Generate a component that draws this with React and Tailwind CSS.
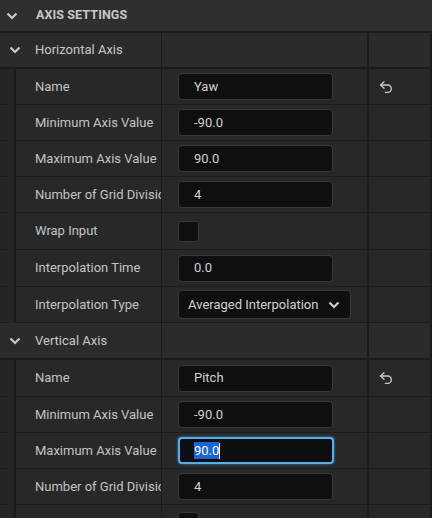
import React from 'react';
import { Undo2 } from 'lucide-react';

const font = { fontFamily: 'Roboto, "Noto Sans", sans-serif' };

const Chevron = ({ className = '' }) => (
    <svg width="12" height="8" viewBox="0 0 12 8" className={className}>
        <path d="M1.5 1.5 6 6l4.5-4.5" stroke="currentColor" strokeWidth="2.2" fill="none" />
    </svg>
);

const TextBox = ({ value }) => (
    <div className="w-[155px] h-[27px] rounded-[4px] bg-[#0f0f0f] border border-[#383838] pl-[15px] flex items-center text-[13px] text-[#d2d2d2]">
        {value}
    </div>
);

const FocusedBox = ({ value }) => (
    <div className="w-[156px] h-[27px] rounded-[4px] bg-[#0c0e12] border-2 border-[#5aaee6] shadow-[0_0_3px_#2b84c8] pl-[14px] flex items-center text-[13px] text-white">
        <span className="bg-[#1765d6] leading-[17px]">{value}</span>
        <span className="w-px h-[16px] bg-white" />
    </div>
);

const CheckBox = () => (
    <div className="w-[21px] h-[21px] rounded-[3px] bg-[#0f0f0f] border border-[#383838]" />
);

const Dropdown = ({ value }) => (
    <div className="w-[173px] h-[29px] rounded-[4px] bg-[#0f0f0f] border border-[#383838] pl-[9px] pr-[10px] flex items-center justify-between text-[13px] text-[#d2d2d2]">
        <span>{value}</span>
        <Chevron className="text-[#d0d0d0]" />
    </div>
);

// tall rows are 37px, the rest 36px (the panel is laid out at ~36.3px per row)
const Row = ({ label, children, reset, tall }) => (
    <div className={`flex ${tall ? 'h-[37px]' : 'h-[36px]'} bg-[#282828]`}>
        <div className="w-[16px] shrink-0 flex flex-col justify-end bg-[#252525] border-r-2 border-[#1b1b1b]">
            <div className="h-px w-[8px] bg-[#1b1b1b]" />
        </div>
        <div className="flex flex-1 border-b border-[#1b1b1b]">
            <div className="w-[146px] shrink-0 border-r border-[#1b1b1b] pl-[19px] flex items-center overflow-hidden whitespace-nowrap text-[13px] text-[#c4c4c4]">
                {label}
            </div>
            <div className="w-[207px] shrink-0 border-r-2 border-[#1b1b1b] pl-[16px] flex items-center">
                {children}
            </div>
            <div className="flex-1 flex items-center pl-[9px] border-r-2 border-[#1b1b1b] text-[#c8c8c8]">
                {reset && <Undo2 size={16} strokeWidth={2} />}
            </div>
        </div>
    </div>
);

const Section = ({ label, tall }) => (
    <div className={`flex ${tall ? 'h-[37px]' : 'h-[36px]'} bg-[#2b2b2b] border-b-2 border-[#1b1b1b]`}>
        <div className="w-[162px] shrink-0 border-r border-[#1b1b1b] pl-[9px] flex items-center text-[13px] text-[#c8c8c8]">
            <Chevron className="text-[#c8c8c8]" />
            <span className="ml-[14px]">{label}</span>
        </div>
        <div className="w-[207px] shrink-0 border-r-2 border-[#1b1b1b]" />
        <div className="flex-1 border-r-2 border-[#1b1b1b]" />
    </div>
);

export default function App() {
    return (
        <div className="w-[432px] h-[518px] overflow-hidden bg-[#242424]" style={font}>
            <div className="flex items-center h-[33px] bg-[#2f2f2f] border-b-2 border-[#1b1b1b] pl-[6px]">
                <Chevron className="text-[#c8c8c8]" />
                <span className="ml-[18px] text-[12.5px] font-bold text-[#c8c8c8] tracking-[0.1px]">AXIS SETTINGS</span>
            </div>

            <Section label="Horizontal Axis" />
            <Row label="Name" reset><TextBox value="Yaw" /></Row>
            <Row label="Minimum Axis Value"><TextBox value="-90.0" /></Row>
            <Row label="Maximum Axis Value"><TextBox value="90.0" /></Row>
            <Row label="Number of Grid Divisions"><TextBox value="4" /></Row>
            <Row label="Wrap Input" tall><CheckBox /></Row>
            <Row label="Interpolation Time" tall><TextBox value="0.0" /></Row>
            <Row label="Interpolation Type"><Dropdown value="Averaged Interpolation" /></Row>

            <Section label="Vertical Axis" tall />
            <Row label="Name" reset tall><TextBox value="Pitch" /></Row>
            <Row label="Minimum Axis Value"><TextBox value="-90.0" /></Row>
            <Row label="Maximum Axis Value"><FocusedBox value="90.0" /></Row>
            <Row label="Number of Grid Divisions"><TextBox value="4" /></Row>
            <Row label="Wrap Input"><CheckBox /></Row>
        </div>
    );
}
